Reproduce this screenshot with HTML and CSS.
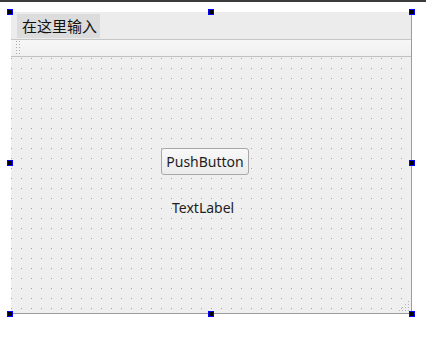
FILE: index.html
```html
<!DOCTYPE html>
<html lang="zh">
	<head>
		<meta charset="utf-8">
		<title>Form</title>
		<link rel="stylesheet" href="styles.css">
	</head>
	<body>
		<div class="topbar"></div>
		<div class="form">
			<div class="menubar">
				<span class="menu-item">在这里输入</span>
			</div>
			<div class="toolbar">
				<div class="grip"></div>
			</div>
			<div class="central">
				<button class="push">PushButton</button>
				<span class="label">TextLabel</span>
				<svg class="sizegrip" width="10" height="10" viewBox="0 0 10 10">
					<rect x="9" y="0" width="1" height="1"/>
					<rect x="6" y="3" width="1" height="1"/>
					<rect x="9" y="3" width="1" height="1"/>
					<rect x="3" y="6" width="1" height="1"/>
					<rect x="6" y="6" width="1" height="1"/>
					<rect x="9" y="6" width="1" height="1"/>
					<rect x="0" y="9" width="1" height="1"/>
					<rect x="3" y="9" width="1" height="1"/>
					<rect x="6" y="9" width="1" height="1"/>
					<rect x="9" y="9" width="1" height="1"/>
				</svg>
			</div>
			<!-- selection handles -->
			<i class="handle h-t h-l"></i>
			<i class="handle h-t h-c"></i>
			<i class="handle h-t h-r"></i>
			<i class="handle h-m h-l"></i>
			<i class="handle h-m h-r"></i>
			<i class="handle h-b h-l"></i>
			<i class="handle h-b h-c"></i>
			<i class="handle h-b h-r"></i>
		</div>
	</body>
</html>
```

FILE: styles.css
```css
html, body {
	min-height: 338px;
}
body {
	margin: 0;
	background: #ffffff;
	font-family: "Noto Sans", "Noto Sans CJK SC", sans-serif;
	font-size: 14px;
	color: #1e1e1e;
}
.topbar {
	height: 2px;
	background: #3c3c3c;
}
.form {
	position: relative;
	margin: 10px 0 0 11px;
	width: 400px;
	height: 301px;
	background: #efefef;
	border-right: 1px solid #9c9c9c;
	border-bottom: 1px solid #9c9c9c;
	display: flex;
	flex-direction: column;
}

/*Menu bar*/
.menubar {
	height: 28px;
	background: #ececec;
	border-bottom: 1px solid #c6c6c6;
	padding: 2px 0 0 6px;
	box-sizing: border-box;
	display: flex;
	align-items: flex-start;
}
.menu-item {
	font-family: "Noto Sans CJK SC", sans-serif;
	font-size: 15px;
	line-height: 24px;
	padding: 0 3px 0 5px;
	background: #dcdcdc;
	color: #111;
}

/*Tool bar*/
.toolbar {
	height: 15px;
	background: linear-gradient(#f7f7f7, #f0f0f0);
	border-bottom: 1px solid #c0c0c0;
	padding: 1px 0 0 5px;
	box-sizing: content-box;
}
.grip {
	width: 4px;
	height: 13px;
	background-image:
		linear-gradient(to bottom, transparent 1px, #f4f4f4 1px),
		linear-gradient(to right, #aaaaaa 1px, transparent 1px);
	background-size: 3px 3px, 3px 3px;
}

/*Central widget with designer grid*/
.central {
	position: relative;
	flex: 1;
	background-color: #efefef;
	background-image:
		linear-gradient(to bottom, transparent 1px, #efefef 1px),
		linear-gradient(to right, #a2a2a2 1px, #efefef 1px);
	background-size: 10px 10px, 10px 10px;
	background-position: 0 1px, 0 1px;
}
.push {
	position: absolute;
	left: 150px;
	top: 91px;
	width: 88px;
	height: 27px;
	padding: 0;
	border: 1px solid #a8a8a8;
	border-radius: 3px;
	background: linear-gradient(#f8f8f8, #ececec);
	font-family: "Noto Sans", sans-serif;
	font-size: 14px;
	color: #1e1e1e;
}
.label {
	position: absolute;
	left: 161px;
	top: 141px;
	line-height: 19px;
}
.sizegrip {
	position: absolute;
	right: 2px;
	bottom: 2px;
	fill: #b4b4b4;
}

/*Selection handles*/
.handle {
	position: absolute;
	width: 4px;
	height: 4px;
	background: #000;
	border: 1px solid #0000ff;
	z-index: 2;
}
.h-t { top: -3px; }
.h-m { top: 148px; }
.h-b { top: 299px; }
.h-l { left: -4px; }
.h-c { left: 197px; }
.h-r { left: 398px; }
```
